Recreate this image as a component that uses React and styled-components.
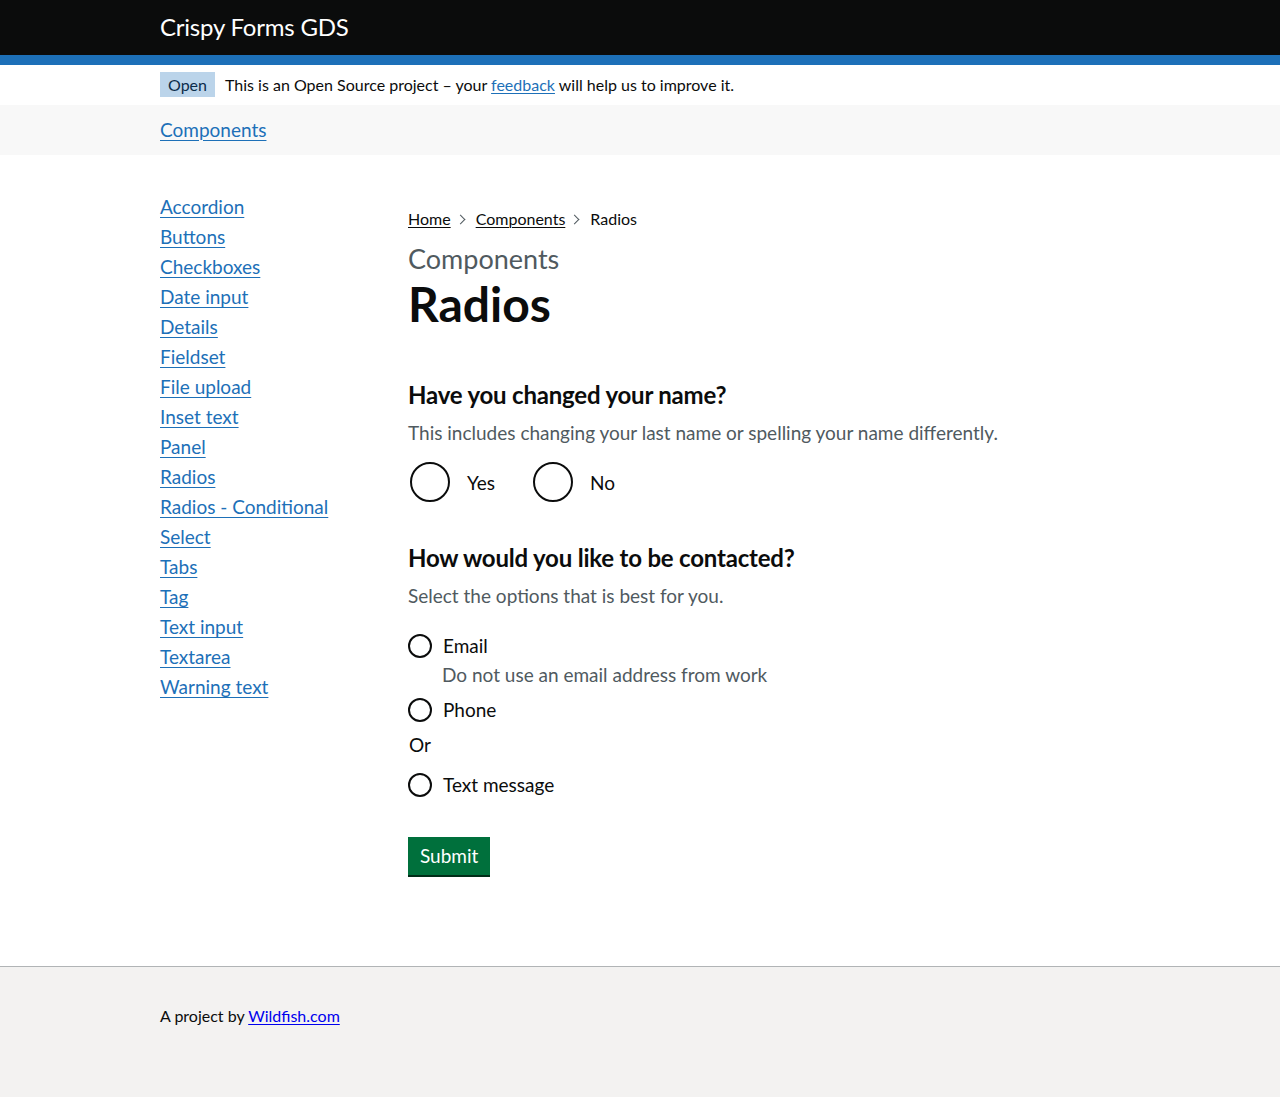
import React from 'react'
import styled, { createGlobalStyle } from 'styled-components'

const FONT = 'Lato, "Liberation Sans", Arial, sans-serif'

const Global = createGlobalStyle`
  html, body { margin: 0; padding: 0; background: #fff; }
  body { font-family: ${FONT}; color: #0b0c0c; }
  #root { min-height: 1097px; display: flex; flex-direction: column; }
`

const Header = styled.header`
  background: #0b0c0c;
  border-bottom: 10px solid #1d70b8;
`

const Container = styled.div`
  width: 960px;
  margin: 0 auto;
`

const HeaderInner = styled(Container)`
  height: 55px;
  display: flex;
  align-items: center;
`

const ServiceName = styled.a`
  color: #fff;
  font-size: 24px;
  text-decoration: none;
  line-height: 1;
  padding-bottom: 2px;
  letter-spacing: -0.2px;
`

const Banner = styled(Container)`
  box-sizing: border-box;
  height: 40px;
  display: flex;
  align-items: center;
  gap: 10px;
  font-size: 16px;
  padding-bottom: 2px;
`

const Tag = styled.strong`
  background: #bbd4ea;
  color: #0c2d4a;
  font-weight: 400;
  font-size: 16px;
  padding: 3px 8px;
  line-height: 19px;
`

const Link = styled.a`
  color: ${p => p.plain ? '#0000ee' : p.dark ? '#0b0c0c' : '#1d70b8'};
  text-decoration: underline;
  text-underline-offset: 0.15em;
  text-decoration-thickness: 1px;
`

const NavBar = styled.nav`
  background: #f8f8f8;
  height: 50px;
`

const NavInner = styled(Container)`
  box-sizing: border-box;
  height: 50px;
  display: flex;
  align-items: center;
  font-size: 19px;
  padding-bottom: 2px;
`

const Page = styled(Container)`
  flex: 1;
  display: grid;
  grid-template-columns: 248px 1fr;
  padding: 39px 0 91px;
`

const SideList = styled.ul`
  list-style: none;
  margin: 0;
  padding: 0;
  display: flex;
  flex-direction: column;
  gap: 5px;
  font-size: 19px;
  line-height: 25px;
`

const Main = styled.main`
  display: flex;
  flex-direction: column;
`

const Crumbs = styled.ol`
  list-style: none;
  margin: 15px 0 0;
  padding: 0;
  display: flex;
  align-items: center;
  font-size: 16px;
  line-height: 20px;
`

const Crumb = styled.li`
  display: flex;
  align-items: center;
  &:not(:first-child)::before {
    content: '';
    width: 6px;
    height: 6px;
    border-top: 1px solid #505a5f;
    border-right: 1px solid #505a5f;
    transform: rotate(45deg);
    margin: 0 12px 0 6px;
  }
`

const Caption = styled.span`
  display: block;
  color: #505a5f;
  font-size: 27px;
  line-height: 30px;
  margin-top: 15px;
`

const Title = styled.h1`
  font-size: 48px;
  font-weight: 700;
  line-height: 50px;
  margin: 5px 0 51px;
`

const Fieldset = styled.fieldset`
  border: 0;
  margin: 0 0 ${p => p.gap || 30}px;
  padding: 0;
`

const Legend = styled.legend`
  font-size: 24px;
  font-weight: 700;
  line-height: 30px;
  padding: 0;
  margin-bottom: 10px;
  letter-spacing: -0.2px;
`

const Hint = styled.div`
  color: #505a5f;
  font-size: 19px;
  line-height: 25px;
  margin-top: ${p => p.top ?? 0}px;
  margin-bottom: ${p => p.gap ?? 15}px;
  padding-left: ${p => p.indent ?? 0}px;
`

const Radios = styled.div`
  display: flex;
  flex-direction: ${p => p.inline ? 'row' : 'column'};
  gap: ${p => p.inline ? '34px' : '10px'};
`

const Item = styled.label`
  display: flex;
  align-items: center;
  gap: ${p => p.small ? '11px' : '17px'};
  font-size: 19px;
  line-height: 25px;
  cursor: pointer;
  padding: ${p => p.small ? '0' : '0 2px'};
`

const Circle = styled.span`
  box-sizing: border-box;
  width: ${p => p.small ? 24 : 40}px;
  height: ${p => p.small ? 24 : 40}px;
  border: 2px solid #0b0c0c;
  border-radius: 50%;
  flex-shrink: 0;
`

const Divider = styled.div`
  font-size: 19px;
  line-height: 25px;
  padding-left: 1px;
  margin-bottom: 5px;
`

const Button = styled.button`
  align-self: flex-start;
  background: #00703c;
  color: #fff;
  border: 0;
  box-shadow: 0 2px 0 #002d18;
  font-family: ${FONT};
  font-size: 19px;
  line-height: 20px;
  padding: 9px 12px 9px;
  margin-top: 10px;
  cursor: pointer;
`

const Footer = styled.footer`
  background: #f3f2f1;
  border-top: 1px solid #b1b4b6;
  height: 130px;
`

const FooterInner = styled(Container)`
  padding-top: 39px;
  font-size: 16px;
  line-height: 20px;
`

const components = [
  'Accordion', 'Buttons', 'Checkboxes', 'Date input', 'Details', 'Fieldset',
  'File upload', 'Inset text', 'Panel', 'Radios', 'Radios - Conditional',
  'Select', 'Tabs', 'Tag', 'Text input', 'Textarea', 'Warning text',
]

const Radio = ({ small, label }) => (
  <Item small={small}>
    <Circle small={small} />
    <span>{label}</span>
  </Item>
)

export default function App() {
  return (
    <>
      <Global />
      <Header>
        <HeaderInner>
          <ServiceName href="#">Crispy Forms GDS</ServiceName>
        </HeaderInner>
      </Header>
      <Banner>
        <Tag>Open</Tag>
        <span>This is an Open Source project – your <Link href="#">feedback</Link> will help us to improve it.</span>
      </Banner>
      <NavBar>
        <NavInner>
          <Link href="#">Components</Link>
        </NavInner>
      </NavBar>
      <Page>
        <SideList>
          {components.map(c => (
            <li key={c}><Link href="#">{c}</Link></li>
          ))}
        </SideList>
        <Main>
          <Crumbs>
            <Crumb><Link dark href="#">Home</Link></Crumb>
            <Crumb><Link dark href="#">Components</Link></Crumb>
            <Crumb>Radios</Crumb>
          </Crumbs>
          <Caption>Components</Caption>
          <Title>Radios</Title>
          <Fieldset gap={41}>
            <Legend>Have you changed your name?</Legend>
            <Hint gap={17}>This includes changing your last name or spelling your name differently.</Hint>
            <Radios inline>
              <Radio label="Yes" />
              <Radio label="No" />
            </Radios>
          </Fieldset>
          <Fieldset>
            <Legend>How would you like to be contacted?</Legend>
            <Hint gap={25}>Select the options that is best for you.</Hint>
            <Radios>
              <div>
                <Radio small label="Email" />
                <Hint indent={34} top={4} gap={0}>Do not use an email address from work</Hint>
              </div>
              <Radio small label="Phone" />
              <Divider>Or</Divider>
              <Radio small label="Text message" />
            </Radios>
          </Fieldset>
          <Button>Submit</Button>
        </Main>
      </Page>
      <Footer>
        <FooterInner>
          A project by <Link plain href="#">Wildfish.com</Link>
        </FooterInner>
      </Footer>
    </>
  )
}
